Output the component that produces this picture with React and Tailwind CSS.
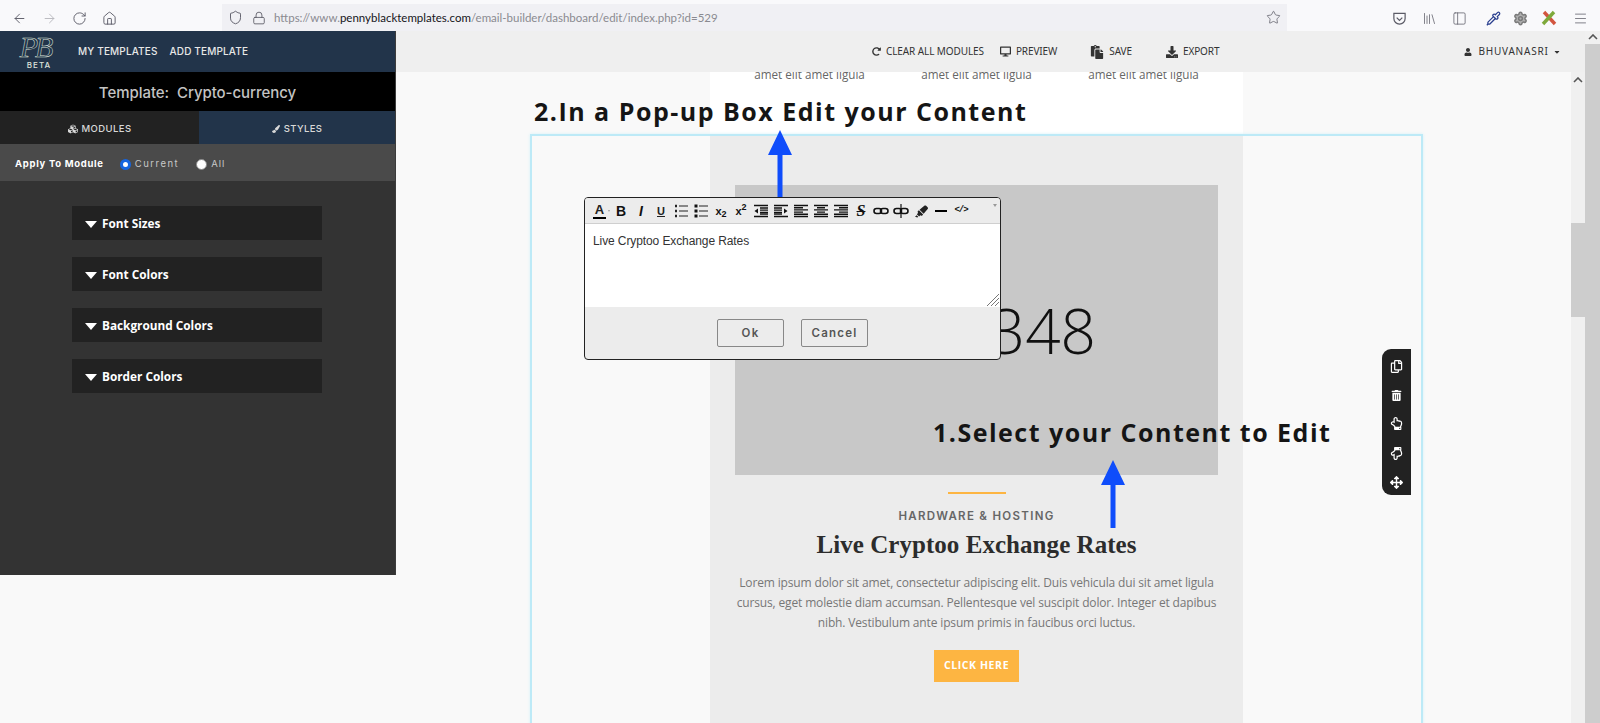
import { ArrowLeft, ArrowRight, RotateCw, Home, Shield, Lock, Star, Library, PanelLeft, Pipette, Menu, Settings } from 'lucide-react';
import { FaCubes, FaPaintBrush, FaUser, FaDesktop, FaPaste, FaDownload, FaRedoAlt, FaRegCopy, FaTrashAlt, FaRegHandPointUp, FaRegHandPointDown, FaArrowsAlt, FaCaretDown, FaHighlighter } from 'react-icons/fa';

const sans = "font-['Open_Sans',sans-serif]";
const ui = "font-['Inter','Liberation_Sans',sans-serif]";

const Lines = ({ rows }) => (
  <svg width="14" height="14" viewBox="0 0 14 14" fill="none" stroke="#111" strokeWidth="1.4">
    {rows.map(([x1, x2], i) => (
      <line key={i} x1={x1} x2={x2} y1={1.5 + i * 2.2} y2={1.5 + i * 2.2} />
    ))}
  </svg>
);

const Indent = ({ flip }) => (
  <svg width="14" height="14" viewBox="0 0 14 14" fill="none" stroke="#111" strokeWidth="1.3">
    <line x1="0" x2="14" y1="1.5" y2="1.5" />
    <line x1="0" x2="14" y1="12.5" y2="12.5" />
    {[4, 6.2, 8.4, 10].map((y) => (
      <line key={y} x1={flip ? 0 : 6} x2={flip ? 8 : 14} y1={y} y2={y} />
    ))}
    <path d={flip ? 'M10 4.5 L13.5 7 L10 9.5 Z' : 'M4 4.5 L0.5 7 L4 9.5 Z'} fill="#111" stroke="none" />
  </svg>
);

const ListIcon = ({ numbered }) => (
  <svg width="14" height="14" viewBox="0 0 14 14" fill="none" stroke="#222">
    {[2, 7, 12].map((y) => (
      <g key={y}>
        <line x1="5" x2="14" y1={y} y2={y} strokeWidth="1" />
        {numbered ? (
          <line x1="1" x2="3" y1={y} y2={y} strokeWidth="2.4" />
        ) : (
          <rect x="0.5" y={y - 1.5} width="3" height="3" fill="#111" stroke="none" />
        )}
      </g>
    ))}
  </svg>
);

const LinkIcon = ({ broken }) => (
  <svg width="16" height="14" viewBox="0 0 16 14" fill="none" stroke="#111" strokeWidth="1.6">
    <rect x="1" y="4.5" width="7.5" height="5" rx="2.5" />
    <rect x="7.5" y="4.5" width="7.5" height="5" rx="2.5" />
    {broken && <line x1="8" x2="8" y1="0" y2="14" strokeWidth="1.2" />}
  </svg>
);

const toolbar = [
  <span className="-ml-[3px] relative flex flex-col items-center text-[13px] leading-[12px] font-bold text-[#222] font-['Liberation_Sans',sans-serif]">A<span className="block w-[13px] h-[2px] bg-black mt-[1px]" /><span className="absolute -right-[4px] top-[6px] w-0 h-0 border-x-[1.5px] border-x-transparent border-t-[2px] border-t-[#999]" /></span>,
  <span className="text-[14px] font-black text-[#111] font-['Liberation_Sans',sans-serif]">B</span>,
  <span className="text-[14px] font-black italic text-[#111] font-['Liberation_Sans',sans-serif]">I</span>,
  <span className="text-[11px] font-bold underline text-[#222] font-['Liberation_Sans',sans-serif]">U</span>,
  <ListIcon numbered />,
  <ListIcon />,
  <span className="text-[11px] font-bold text-[#111] font-['Liberation_Sans',sans-serif]">x<sub className="text-[9px]">2</sub></span>,
  <span className="text-[11px] font-bold text-[#111] font-['Liberation_Sans',sans-serif]">x<sup className="text-[9px]">2</sup></span>,
  <Indent />,
  <Indent flip />,
  <Lines rows={[[0, 14], [0, 9], [0, 14], [0, 9], [0, 14], [0, 14]]} />,
  <Lines rows={[[0, 14], [3, 11], [0, 14], [3, 11], [0, 14], [0, 14]]} />,
  <Lines rows={[[0, 14], [5, 14], [0, 14], [5, 14], [0, 14], [0, 14]]} />,
  <span className="text-[16px] leading-[16px] font-bold italic line-through text-[#111] font-['Liberation_Serif',serif]">S</span>,
  <LinkIcon />,
  <LinkIcon broken />,
  <FaHighlighter className="text-[13px] text-[#222]" />,
  <span className="block w-[12px] h-[2px] bg-black" />,
  <span className="text-[9px] font-bold tracking-[-1px] text-[#111] font-['Liberation_Mono',monospace]">&lt;/&gt;</span>,
];

const Arrow = ({ className }) => (
  <svg className={className} width="26" height="68" viewBox="0 0 26 68">
    <path d="M13 0 L25 25 L15.5 25 L15.5 68 L10.5 68 L10.5 25 L1 25 Z" fill="#0f4dfb" />
  </svg>
);

const TopAction = ({ icon, label, className }) => (
  <div className={`flex items-center gap-[5px] ${className}`}>
    {icon}
    <span className="text-[10px] text-[#333] tracking-[-0.1px]">{label}</span>
  </div>
);

export default function App() {
  return (
    <div className={`relative w-[1600px] h-[723px] overflow-hidden flex flex-col bg-[#f9f9f9] ${sans}`}>
      {/* browser chrome */}
      <div className="h-[31px] shrink-0 flex bg-[#f9f9fb] text-[#5b5b66]">
        <div className="w-[222px] flex items-center pt-[5px] pl-[12px] gap-[15px]">
          <ArrowLeft size={15} strokeWidth={1.5} />
          <ArrowRight size={15} strokeWidth={1.5} className="text-[#b8b8bd]" />
          <RotateCw size={15} strokeWidth={1.5} />
          <Home size={15} strokeWidth={1.5} />
        </div>
        <div className="w-[1065px] mt-[4px] bg-[#f0f0f4] flex items-center pl-[6px] pr-[6px] font-['Lato',sans-serif]">
          <Shield size={15} strokeWidth={1.5} />
          <Lock size={14} strokeWidth={1.5} className="ml-[9px]" />
          <span className="ml-[8px] text-[11.5px] text-[#8a8a90]">
            https://www.<span className="text-[#15141a]">pennyblacktemplates.com</span>/email-builder/dashboard/edit/index.php?id=529
          </span>
          <Star size={15} strokeWidth={1.2} className="ml-auto" />
        </div>
        <div className="flex-1 flex items-center pt-[5px] pl-[105px] gap-[15px]">
          <svg width="15" height="15" viewBox="0 0 16 16" fill="none" stroke="#5b5b66" strokeWidth="1.3">
            <path d="M2 2.5 H14 V8 A6 6 0 0 1 2 8 Z" />
            <path d="M5 7 L8 10 L11 7" />
          </svg>
          <Library size={15} strokeWidth={1.2} />
          <PanelLeft size={15} strokeWidth={1.2} />
          <Pipette size={15} strokeWidth={2} className="text-[#2a3f8f] ml-[4px]" />
          <Settings size={15} strokeWidth={2.4} fill="#b0b0b0" className="text-[#7b7b7b] -ml-[3px]" />
          <svg width="16" height="16" viewBox="0 0 16 16" className="-ml-[2px]">
            <path d="M3 2 L14 14" stroke="#d2553f" strokeWidth="3.4" />
            <path d="M13 2 L2 14" stroke="#7ea93b" strokeWidth="3.4" />
          </svg>
          <Menu size={15} strokeWidth={1.2} className="ml-[1px]" />
        </div>
      </div>

      <div className="flex-1 flex min-h-0">
        {/* sidebar */}
        <aside className="w-[396px] h-[544px] shrink-0 flex flex-col bg-[#333333] border-r border-[#3c3c3c]">
          <div className={`h-[41px] flex items-center bg-[#22344a] ${ui}`}>
            <div className="w-[78px] flex flex-col items-center text-[#dfe3dc] pt-[1px] -ml-[4px] mr-[4px]">
              <span className="text-[30px] leading-[27px] italic tracking-[-3px] font-['Liberation_Serif',serif] text-transparent [-webkit-text-stroke:0.5px_#dfe3dc]">PB</span>
              <span className="ml-[8px] text-[8px] leading-[11px] font-medium tracking-[1px]">BETA</span>
            </div>
            <span className="text-[10px] font-medium tracking-[0.15px] text-[#e8e8e8]">MY TEMPLATES</span>
            <span className="ml-[12px] text-[10px] font-medium tracking-[0.15px] text-[#e8e8e8]">ADD TEMPLATE</span>
          </div>
          <div className={`h-[39px] flex items-center justify-center pt-[3px] bg-black text-[15px] font-medium text-[#c4c4c4] tracking-[-0.05px] ${ui}`}>
            Template:&nbsp; Crypto-currency
          </div>
          <div className={`h-[33px] flex text-[9.5px] font-medium tracking-[0.4px] text-[#d8d8d8] ${ui}`}>
            <div className="w-[199px] flex items-center justify-center pt-[3px] gap-[4px] bg-[#222222]">
              <FaCubes className="text-[10px]" /> MODULES
            </div>
            <div className="flex-1 flex items-center justify-center pt-[3px] gap-[4px] bg-[#22344a]">
              <FaPaintBrush className="text-[8px]" /> STYLES
            </div>
          </div>
          <div className={`h-[37px] flex items-center pl-[15px] pt-[3px] bg-[#4a4a4a] text-[9.5px] ${ui}`}>
            <span className="font-bold tracking-[0.7px] text-white">Apply To Module</span>
            <span className="ml-[16px] w-[11px] h-[11px] rounded-full bg-white border-[3px] border-[#1565e0]" />
            <span className="ml-[4px] tracking-[1.5px] text-[#c8c8c8]">Current</span>
            <span className="ml-[17px] w-[11px] h-[11px] rounded-full bg-white border border-[#888]" />
            <span className="ml-[4px] tracking-[1px] text-[#c8c8c8]">All</span>
          </div>
          <div className="flex flex-col gap-[17px] pl-[72px] pt-[25px]">
            {['Font Sizes', 'Font Colors', 'Background Colors', 'Border Colors'].map((t) => (
              <div key={t} className="w-[250px] h-[34px] flex items-center pl-[13px] pt-[2px] bg-[#222222] text-[11.8px] font-bold text-white">
                <span className="w-0 h-0 border-x-[6.5px] border-x-transparent border-t-[7px] border-t-white mr-[5px]" />
                {t}
              </div>
            ))}
          </div>
        </aside>

        <div className="flex-1 flex flex-col min-w-0">
          {/* builder top bar */}
          <div className="h-[41px] shrink-0 flex items-center bg-[#efefef] pl-[476px] font-['Noto_Sans',sans-serif]">
            <TopAction icon={<FaRedoAlt className="text-[9px] text-[#333]" />} label="CLEAR ALL MODULES" className="" />
            <TopAction icon={<FaDesktop className="text-[11px] text-[#333]" />} label="PREVIEW" className="ml-[16px]" />
            <TopAction icon={<FaPaste className="text-[14px] text-[#333]" />} label="SAVE" className="ml-[33px]" />
            <TopAction icon={<FaDownload className="text-[12px] text-[#333]" />} label="EXPORT" className="ml-[34px]" />
            <FaUser className="ml-[245px] text-[8px] text-[#333]" />
            <span className="ml-[6px] text-[10px] tracking-[0.8px] text-[#333]">BHUVANASRI</span>
            <FaCaretDown className="ml-[4px] text-[8px] text-[#333]" />
          </div>

          <div className="flex-1 flex min-h-0">
            {/* email canvas */}
            <div className="w-[1175px] shrink-0 overflow-hidden pl-[134px]">
              <div className="w-[893px]">
                <div className="w-[533px] h-[62px] mx-auto bg-white grid grid-cols-3 px-[16px] text-center text-[11.7px] leading-[5px] text-[#666]">
                  <span>amet elit amet ligula</span>
                  <span>amet elit amet ligula</span>
                  <span>amet elit amet ligula</span>
                </div>
                <div className="h-[700px] border-2 border-[#bdeaf7] shadow-[0_0_3px_#d5f1f9]">
                  <div className="w-[533px] h-full mx-auto px-[25px] pt-[49px] bg-[#ececec] flex flex-col items-center">
                    <div className="w-full h-[290px] bg-[#c8c8c8] flex items-center justify-end pr-[122px] text-[62px] font-light text-[#111]">348</div>
                    <div className="mt-[17px] w-[58px] h-[2px] bg-[#fdb542]" />
                    <div className="mt-[14px] text-[11.5px] leading-[16px] font-semibold tracking-[1.3px] text-[#666] font-['Inter',sans-serif]">HARDWARE &amp; HOSTING</div>
                    <div className="mt-[5px] text-[25px] leading-[32px] font-bold tracking-[0.05px] text-[#2c2c2c] font-['Liberation_Serif',serif]">Live Cryptoo Exchange Rates</div>
                    <p className="mt-[12px] w-[490px] -mx-[10px] text-center text-[12px] tracking-[-0.15px] leading-[20px] text-[#777]">
                      Lorem ipsum dolor sit amet, consectetur adipiscing elit. Duis vehicula dui sit amet ligula cursus, eget molestie diam accumsan. Pellentesque vel suscipit dolor. Integer et dapibus nibh. Vestibulum ante ipsum primis in faucibus orci luctus.
                    </p>
                    <div className="mt-[17px] w-[85px] h-[32px] flex items-center justify-center bg-[#fdb542] text-[10.5px] font-bold tracking-[0.6px] text-white">CLICK HERE</div>
                  </div>
                </div>
              </div>
            </div>
            {/* inner scrollbar */}
            <div className="flex-1 bg-[#f0f0f0] flex flex-col">
              <div className="h-[151px] flex justify-center pt-[5px]">
                <svg width="10" height="6" viewBox="0 0 10 6" fill="none" stroke="#555" strokeWidth="1.6"><path d="M1 5 L5 1 L9 5" /></svg>
              </div>
              <div className="h-[94px] bg-[#cdcdcd]" />
            </div>
          </div>
        </div>

        {/* outer scrollbar */}
        <div className="w-[15px] shrink-0 flex flex-col bg-[#cdcdcd]">
          <div className="h-[13px] bg-[#f0f0f0] flex justify-center pt-[3px]">
            <svg width="10" height="6" viewBox="0 0 10 6" fill="none" stroke="#555" strokeWidth="1.6"><path d="M1 5 L5 1 L9 5" /></svg>
          </div>
        </div>
      </div>

      {/* tutorial annotations */}
      <div className="absolute left-[534px] top-[91px] text-[25px] leading-[40px] font-bold tracking-[1.5px] text-[#151515] whitespace-nowrap">2.In a Pop-up Box Edit your Content</div>
      <div className="absolute left-[933px] top-[412px] text-[25px] leading-[40px] font-bold tracking-[1.5px] text-[#151515] whitespace-nowrap">1.Select your Content to Edit</div>
      <Arrow className="absolute left-[767px] top-[130px]" />
      <Arrow className="absolute left-[1100px] top-[460px]" />

      {/* popup editor */}
      <div className="absolute left-[584px] top-[197px] w-[417px] h-[163px] flex flex-col rounded-[4px] border border-[#222] overflow-hidden bg-[#ececec]">
        <div className="relative h-[26px] shrink-0 grid grid-cols-[repeat(19,20px)] items-center pl-[6px] pt-[1px] border-b border-[#cfcfcf] bg-[#ececec]">
          {toolbar.map((item, i) => (
            <div key={i} className="flex items-center justify-center">{item}</div>
          ))}
          <span className="absolute right-[3px] top-[6px] w-0 h-0 border-x-[2px] border-x-transparent border-t-[3px] border-t-[#999]" />
        </div>
        <div className="relative h-[83px] shrink-0 bg-white pl-[8px] pt-[9px] text-[12px] tracking-[-0.1px] leading-[16px] text-[#333] font-['Liberation_Sans',sans-serif]">
          Live Cryptoo Exchange Rates
          <svg className="absolute right-[1px] bottom-[1px]" width="12" height="12" viewBox="0 0 12 12" stroke="#777" strokeWidth="1">
            <path d="M0 12 L12 0 M4 12 L12 4 M8 12 L12 8" />
          </svg>
        </div>
        <div className={`flex-1 flex justify-center gap-[17px] pt-[12px] text-[11.5px] font-semibold tracking-[1.2px] text-[#555] ${ui}`}>
          <div className="w-[67px] h-[28px] flex items-center justify-center pt-[1px] rounded-[2px] border border-[#888]">Ok</div>
          <div className="w-[67px] h-[28px] flex items-center justify-center pt-[1px] rounded-[2px] border border-[#888]">Cancel</div>
        </div>
      </div>

      {/* module tools */}
      <div className="absolute left-[1382px] top-[349px] w-[29px] h-[146px] flex flex-col items-center justify-between pt-[11px] pb-[6px] rounded-l-[9px] bg-[#222222] text-white text-[13px]">
        <FaRegCopy />
        <FaTrashAlt className="text-[11px]" />
        <FaRegHandPointUp />
        <FaRegHandPointDown />
        <FaArrowsAlt />
      </div>
    </div>
  );
}
